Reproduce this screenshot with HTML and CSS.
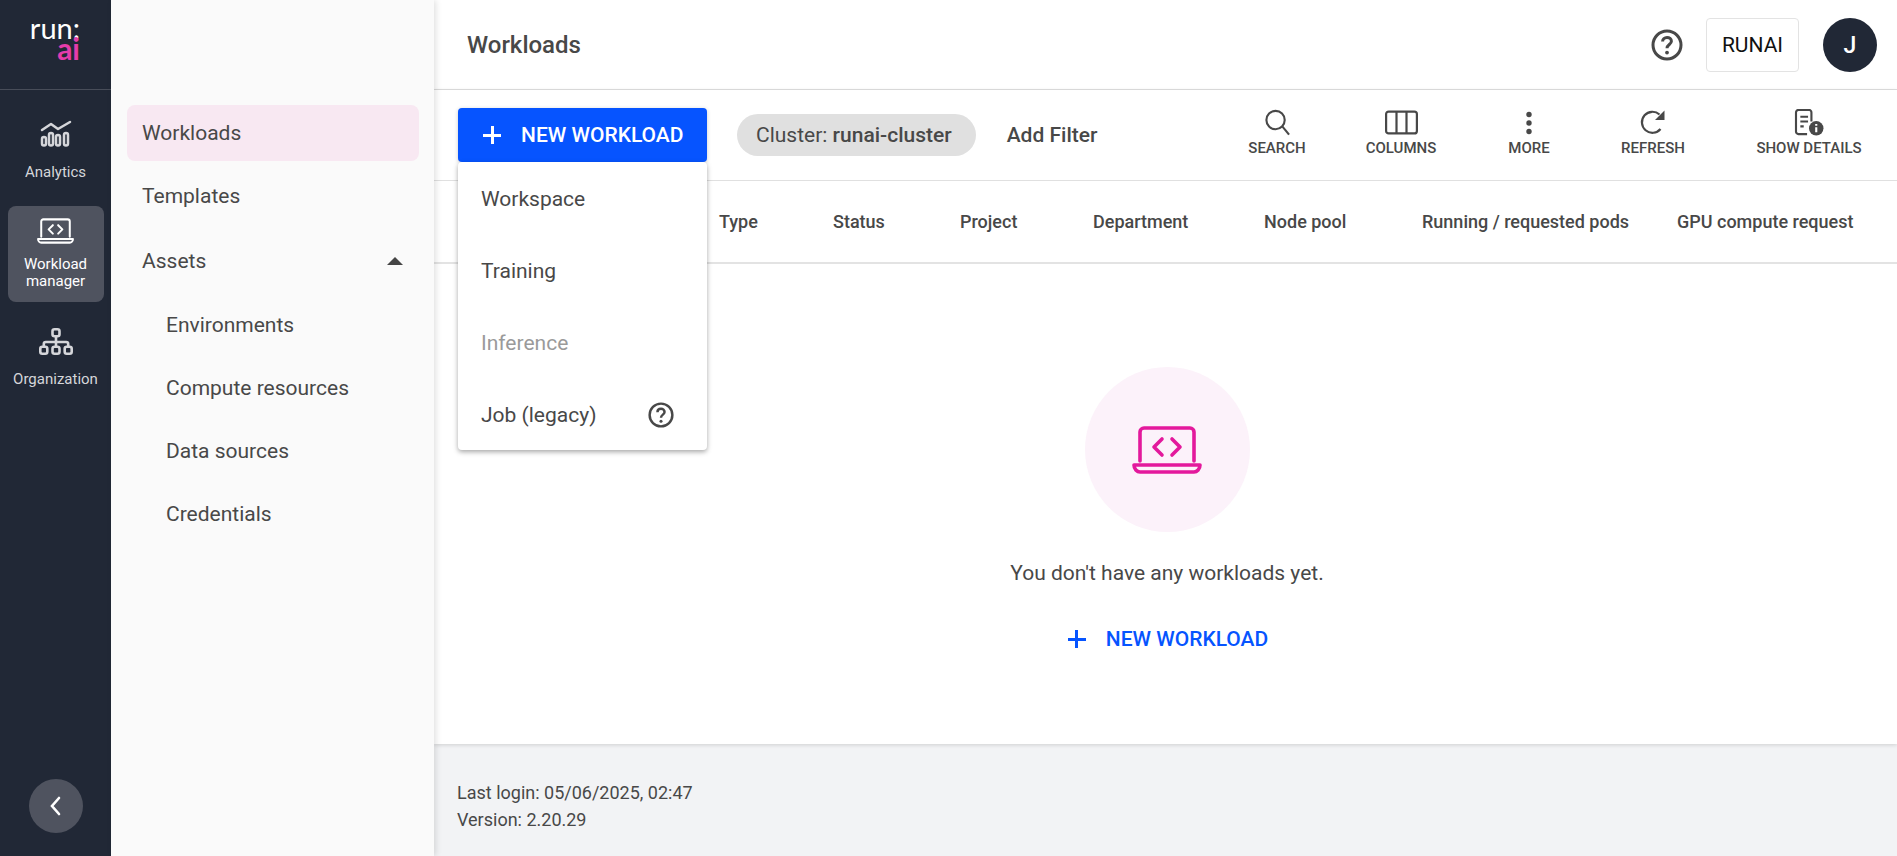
FILE: index.html
```html
<!DOCTYPE html>
<html lang="en">
<head>
  <meta charset="UTF-8">
  <title>Workloads</title>
  <link rel="stylesheet" href="styles.css">
</head>
<body>

  <svg class="defs" width="0" height="0">
    <symbol id="laptop" viewBox="0 0 70 48">
      <path d="M8 35V6a4 4 0 0 1 4-4h46a4 4 0 0 1 4 4v29M2 39h66c0 4-3 7-6 7H8c-3 0-6-3-6-7zM30 13l-8 8 8 8M40 13l8 8-8 8" fill="none" stroke="currentColor" stroke-linejoin="round" stroke-linecap="round"/>
    </symbol>
    <symbol id="help" viewBox="0 0 32 32">
      <circle cx="16" cy="16" r="14" fill="none" stroke="currentColor" stroke-width="3"/>
      <path d="M11.600 12.600c0-2.600 2-4.200 4.400-4.200s4.400 1.600 4.400 3.900c0 3.200-4.400 3.300-4.400 7" fill="none" stroke="currentColor" stroke-width="3"/>
      <circle cx="16" cy="23.600" r="1.900" fill="currentColor"/>
    </symbol>
  </svg>

  <div class="app">
    <aside class="rail">
      <div class="logo">
        <span class="logo-run">run:</span>
        <span class="logo-ai">ai</span>
      </div>
      <a class="rail-item rail-analytics">
        <svg class="rail-icon" width="32" height="28" viewBox="0 0 32 28" fill="none" stroke="currentColor" stroke-width="2.500">
          <path d="M2 11l9-6 7 5 12-7" stroke-linecap="round" stroke-linejoin="round"/>
          <rect x="2" y="18" width="4" height="8.500" rx="2"/>
          <rect x="9" y="14" width="4" height="12.500" rx="2"/>
          <rect x="16" y="16" width="4" height="10.500" rx="2"/>
          <rect x="24" y="14" width="4" height="12.500" rx="2"/>
        </svg>
        <span>Analytics</span>
      </a>
      <a class="rail-item rail-active">
        <svg class="rail-icon laptop-small" width="37" height="26"><use href="#laptop"/></svg>
        <span>Workload<br>manager</span>
      </a>
      <a class="rail-item rail-org">
        <svg class="rail-icon" width="34" height="27" viewBox="0 0 34 27" fill="none" stroke="currentColor" stroke-width="2.600">
          <rect x="13.500" y="1.300" width="7" height="7" rx="2"/>
          <rect x="1.300" y="18.700" width="7" height="7" rx="2"/>
          <rect x="13.500" y="18.700" width="7" height="7" rx="2"/>
          <rect x="25.700" y="18.700" width="7" height="7" rx="2"/>
          <path d="M17 8v11M4.800 19v-3a2 2 0 0 1 2-2h20.400a2 2 0 0 1 2 2v3"/>
        </svg>
        <span>Organization</span>
      </a>
      <button class="collapse">
        <svg width="14" height="22" viewBox="0 0 14 22" fill="none" stroke="currentColor" stroke-width="2.600" stroke-linecap="round"><path d="M10 3l-7 8 7 8"/></svg>
      </button>
    </aside>

    <nav class="sidenav">
      <a class="nav-item nav-active">Workloads</a>
      <a class="nav-item">Templates</a>
      <a class="nav-item nav-group">Assets <i class="caret"></i></a>
      <a class="nav-item nav-sub">Environments</a>
      <a class="nav-item nav-sub">Compute resources</a>
      <a class="nav-item nav-sub">Data sources</a>
      <a class="nav-item nav-sub">Credentials</a>
    </nav>

    <main class="main">
      <header class="topbar">
        <h1>Workloads</h1>
        <svg class="top-help" width="32" height="32"><use href="#help"/></svg>
        <div class="tenant">RUNAI</div>
        <div class="avatar">J</div>
      </header>

      <section class="panel">
        <div class="toolbar">
          <div class="new-wrap">
            <button class="btn-new"><span class="plus"></span>NEW WORKLOAD</button>
            <div class="menu">
              <div class="menu-item">Workspace</div>
              <div class="menu-item">Training</div>
              <div class="menu-item menu-disabled">Inference</div>
              <div class="menu-item">Job (legacy)
                <svg width="26" height="26"><use href="#help"/></svg>
              </div>
            </div>
          </div>
          <div class="chip">Cluster:&nbsp;<b>runai-cluster</b></div>
          <div class="add-filter">Add Filter</div>
          <div class="tools">
            <div class="tool tool-search">
              <svg width="28" height="28" viewBox="0 0 28 28" fill="none" stroke="currentColor" stroke-width="2.200"><circle cx="12.500" cy="11.500" r="9.500"/><path d="M19.500 18l7 8.500"/></svg>
              <span>SEARCH</span>
            </div>
            <div class="tool tool-columns">
              <svg width="33" height="24" viewBox="0 0 33 24" fill="none" stroke="currentColor" stroke-width="2.200"><rect x="1.100" y="1.100" width="30.800" height="21.800" rx="2.500"/><path d="M11.500 1v22M21.500 1v22"/></svg>
              <span>COLUMNS</span>
            </div>
            <div class="tool tool-more">
              <svg width="8" height="24" viewBox="0 0 8 24" fill="currentColor"><circle cx="4" cy="4" r="2.700"/><circle cx="4" cy="12.500" r="2.700"/><circle cx="4" cy="21" r="2.700"/></svg>
              <span>MORE</span>
            </div>
            <div class="tool tool-refresh">
              <svg width="26" height="26" viewBox="0 0 26 26" fill="none" stroke="currentColor" stroke-width="2.200"><path d="M20.500 19.500a10.500 10.500 0 1 1-1-14.500"/><path d="M24.500 1v9.500h-9.500z" fill="currentColor" stroke="none"/></svg>
              <span>REFRESH</span>
            </div>
            <div class="tool tool-details">
              <svg width="31" height="28" viewBox="0 0 31 28" fill="none" stroke="currentColor" stroke-width="2.200"><path d="M13 26H4a2.500 2.500 0 0 1-2.500-2.500v-20A2.500 2.500 0 0 1 4 1h11a2.500 2.500 0 0 1 2.500 2.500V13"/><path d="M6 8h8M6 13h8M6 18h3.500"/><circle cx="22.500" cy="20" r="7.500" fill="currentColor" stroke="none"/><path d="M22.500 19v5M22.500 15.500v1.800" stroke="#fff"/></svg>
              <span>SHOW DETAILS</span>
            </div>
          </div>
        </div>

        <div class="thead">
          <div class="th th-type">Type</div>
          <div class="th th-status">Status</div>
          <div class="th th-project">Project</div>
          <div class="th th-dept">Department</div>
          <div class="th th-pool">Node pool</div>
          <div class="th th-pods">Running / requested pods</div>
          <div class="th">GPU compute request</div>
        </div>

        <div class="empty">
          <div class="empty-circle">
            <svg class="laptop-large" width="70" height="48"><use href="#laptop"/></svg>
          </div>
          <p>You don't have any workloads yet.</p>
          <a class="link-new"><span class="plus"></span>NEW WORKLOAD</a>
        </div>
      </section>

      <footer class="footer">
        <div>Last login: 05/06/2025, 02:47</div>
        <div>Version: 2.20.29</div>
      </footer>
    </main>
  </div>

</body>
</html>
```

FILE: styles.css
```css
* {
  box-sizing: border-box;
}
body {
  margin: 0;
  font-family: Roboto, sans-serif;
  color: #484848;
  background: #fff;
}
.defs {
  position: absolute;
}
.app {
  display: flex;
  height: 856px;
  overflow: hidden;
}

/* dark rail */
.rail {
  width: 111px;
  flex: none;
  display: flex;
  flex-direction: column;
  align-items: center;
  background: #212836;
  color: #d5d6da;
}
.logo {
  width: 100%;
  height: 90px;
  padding: 15px 31px 0 0;
  display: flex;
  flex-direction: column;
  align-items: flex-end;
  border-bottom: 1px solid #484d59;
  font-family: Lato, sans-serif;
  line-height: 25px;
  font-size: 29px;
}
.logo-run {
  color: #fff;
  height: 21px;
}
.logo-ai {
  color: #e53cab;
  font-size: 30px;
  font-weight: 700;
}
.rail-item {
  width: 96px;
  display: flex;
  flex-direction: column;
  align-items: center;
  text-align: center;
  font-size: 15px;
  line-height: 17px;
}
.rail-analytics {
  margin-top: 29px;
  height: 87px;
}
.rail-analytics span {
  margin-top: 17px;
}
.rail-active {
  height: 96px;
  padding-top: 12px;
  border-radius: 8px;
  background: #4f535f;
  color: #fff;
}
.rail-active span {
  margin-top: 12px;
}
.rail-org {
  margin-top: 26px;
}
.rail-org span {
  margin-top: 16px;
}
.laptop-small {
  stroke-width: 3.8;
}
.collapse {
  margin-top: auto;
  margin-bottom: 23px;
  width: 54px;
  height: 54px;
  padding: 0;
  display: flex;
  align-items: center;
  justify-content: center;
  border: none;
  border-radius: 50%;
  background: #4f535f;
  color: #fff;
}

/* second level nav */
.sidenav {
  width: 323px;
  flex: none;
  padding: 105px 15px 0 16px;
  background: #fafafa;
  box-shadow: 2px 0 6px rgba(0, 0, 0, .12);
  z-index: 1;
  font-size: 21px;
}
.nav-item {
  display: flex;
  align-items: center;
  justify-content: space-between;
  height: 56px;
  margin-bottom: 7px;
  padding: 0 16px 0 15px;
  border-radius: 8px;
}
.nav-active {
  background: #f8e8f2;
}
.nav-group {
  margin-top: 9px;
  margin-bottom: 8px;
}
.nav-sub {
  padding-left: 39px;
}
.caret {
  width: 0;
  height: 0;
  border-left: 8px solid transparent;
  border-right: 8px solid transparent;
  border-bottom: 8px solid #454545;
}

/* main column */
.main {
  flex: 1;
  display: flex;
  flex-direction: column;
  background: #f2f3f5;
}
.topbar {
  height: 90px;
  flex: none;
  display: flex;
  align-items: center;
  padding: 1px 20px 0 33px;
  background: #fff;
  border-bottom: 1px solid #e0e0e0;
}
.topbar h1 {
  margin: 0 auto 0 0;
  font-size: 24px;
  font-weight: 500;
}
.tenant {
  width: 93px;
  height: 54px;
  margin: 0 24px 0 23px;
  display: flex;
  align-items: center;
  justify-content: center;
  border: 1px solid #e3e3e3;
  border-radius: 4px;
  color: #111;
  font-size: 21px;
}
.avatar {
  width: 54px;
  height: 54px;
  display: flex;
  align-items: center;
  justify-content: center;
  border-radius: 50%;
  background: #212836;
  color: #fff;
  font-size: 23px;
  font-weight: 500;
}
.panel {
  height: 654px;
  flex: none;
  display: flex;
  flex-direction: column;
  background: #fff;
  box-shadow: 0 1px 4px rgba(0, 0, 0, .15);
}

/* toolbar */
.toolbar {
  height: 91px;
  flex: none;
  display: flex;
  align-items: center;
  padding-left: 24px;
  border-bottom: 1px solid #e0e0e0;
}
.new-wrap {
  position: relative;
}
.btn-new {
  width: 249px;
  height: 54px;
  display: flex;
  align-items: center;
  padding: 0 0 0 25px;
  border: none;
  border-radius: 4px;
  background: #0654ff;
  color: #fff;
  font-family: inherit;
  font-size: 21px;
  font-weight: 500;
  box-shadow: 0 1px 4px rgba(0, 0, 0, .2);
}
.plus {
  position: relative;
  width: 18px;
  height: 18px;
  flex: none;
  margin-right: 20px;
  background:
    linear-gradient(currentColor, currentColor) center / 100% 3px no-repeat,
    linear-gradient(currentColor, currentColor) center / 3px 100% no-repeat;
}
.menu {
  position: absolute;
  top: 54px;
  left: 0;
  width: 249px;
  height: 288px;
  padding-top: 1px;
  border-radius: 4px;
  background: #fff;
  box-shadow: 0 2px 5px rgba(0, 0, 0, .35);
  z-index: 2;
  font-size: 21px;
}
.menu-item {
  height: 72px;
  display: flex;
  align-items: center;
  justify-content: space-between;
  padding: 0 33px 0 23px;
}
.menu-disabled {
  color: #9a9a9a;
}
.chip {
  height: 42px;
  margin-left: 30px;
  padding: 0 24px 0 19px;
  display: flex;
  align-items: center;
  border-radius: 21px;
  background: #e0e0e0;
  font-size: 21px;
}
.chip b {
  font-weight: 500;
}
.add-filter {
  margin-left: 31px;
  font-size: 21px;
  font-weight: 500;
}
.tools {
  margin-left: auto;
  margin-top: -4px;
  padding-right: 3px;
  display: flex;
}
.tool {
  display: flex;
  flex-direction: column;
  align-items: center;
  height: 48px;
  font-size: 15px;
  font-weight: 500;
}
.tool svg {
  height: 28px;
  margin-bottom: 3px;
}
.tool-search { width: 98px; }
.tool-columns { width: 150px; }
.tool-more { width: 106px; }
.tool-refresh { width: 142px; }
.tool-details { width: 170px; }

/* table head */
.thead {
  height: 83px;
  flex: none;
  display: flex;
  align-items: center;
  padding-left: 285px;
  border-bottom: 2px solid #e3e3e3;
  font-size: 18px;
  font-weight: 500;
}
.th {
  flex: none;
}
.th-type { width: 114px; }
.th-status { width: 127px; }
.th-project { width: 133px; }
.th-dept { width: 171px; }
.th-pool { width: 158px; }
.th-pods { width: 255px; }

/* empty state */
.empty {
  flex: 1;
  display: flex;
  flex-direction: column;
  align-items: center;
  padding: 103px 0 0 3px;
}
.empty-circle {
  width: 165px;
  height: 165px;
  display: flex;
  align-items: center;
  justify-content: center;
  border-radius: 50%;
  background: #fcf2fa;
}
.laptop-large {
  color: #e3199c;
  stroke-width: 3.6;
}
.empty p {
  margin: 27px 0 0;
  font-size: 21px;
  line-height: 28px;
}
.link-new {
  margin-top: 40px;
  padding-left: 2px;
  display: flex;
  align-items: center;
  color: #0654ff;
  font-size: 21px;
  font-weight: 500;
}

/* footer */
.footer {
  padding: 35px 23px 0;
  font-size: 18px;
  line-height: 27px;
}
```
